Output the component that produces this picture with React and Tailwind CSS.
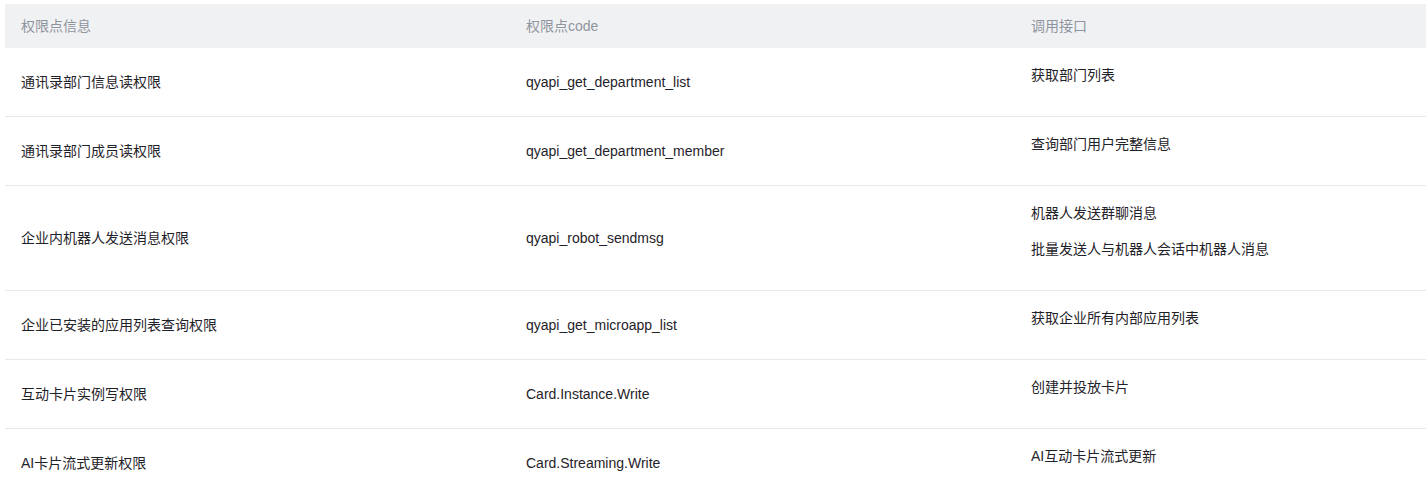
const rows = [
  { name: "通讯录部门信息读权限", code: "qyapi_get_department_list", apis: ["获取部门列表"] },
  { name: "通讯录部门成员读权限", code: "qyapi_get_department_member", apis: ["查询部门用户完整信息"] },
  {
    name: "企业内机器人发送消息权限",
    code: "qyapi_robot_sendmsg",
    apis: ["机器人发送群聊消息", "批量发送人与机器人会话中机器人消息"],
  },
  { name: "企业已安装的应用列表查询权限", code: "qyapi_get_microapp_list", apis: ["获取企业所有内部应用列表"] },
  { name: "互动卡片实例写权限", code: "Card.Instance.Write", apis: ["创建并投放卡片"] },
  { name: "AI卡片流式更新权限", code: "Card.Streaming.Write", apis: ["AI互动卡片流式更新"] },
];

const font = {
  fontFamily: '"Segoe UI", "Liberation Sans", "Noto Sans CJK SC", sans-serif',
};

const App = () => {
  return (
    <div className="bg-white w-[1426px] h-[494px] overflow-hidden pt-1 pl-[5px]" style={font}>
      <table className="w-[1421px] border-collapse table-fixed text-[14px]">
        <colgroup>
          <col className="w-[506px]" />
          <col className="w-[504px]" />
          <col />
        </colgroup>
        <thead>
          <tr className="bg-[#f0f1f3] h-[44px]">
            <th className="text-left font-normal text-[#8f959e] px-4 align-middle">权限点信息</th>
            <th className="text-left font-normal text-[#8f959e] pl-[15px] pr-4 align-middle">权限点code</th>
            <th className="text-left font-normal text-[#8f959e] px-4 align-middle">调用接口</th>
          </tr>
        </thead>
        <tbody className="text-[#1f2329]">
          {rows.map((row) => (
            <tr key={row.code} className="border-b border-[#e8e9eb]">
              <td className="px-4 py-4 align-middle">{row.name}</td>
              <td className="pl-[15px] pr-4 py-4 align-middle">{row.code}</td>
              <td className="px-4 py-4 align-top">
                {row.apis.map((api) => (
                  <p key={api} className="leading-[22px] mb-[14px]">
                    {api}
                  </p>
                ))}
              </td>
            </tr>
          ))}
        </tbody>
      </table>
    </div>
  );
};

export default App;
